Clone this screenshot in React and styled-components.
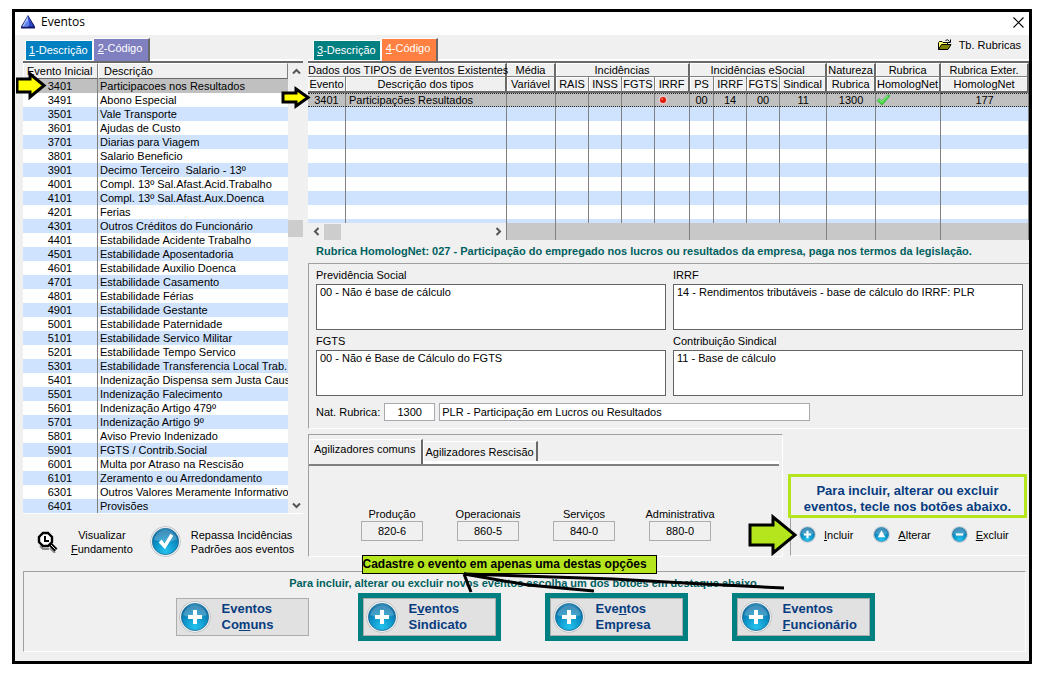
import React, { useState } from "react";
import styled, { createGlobalStyle } from "styled-components";

const EVENTS = [
  ["3401", "Participacoes nos Resultados"],
  ["3491", "Abono Especial"],
  ["3501", "Vale Transporte"],
  ["3601", "Ajudas de Custo"],
  ["3701", "Diarias para Viagem"],
  ["3801", "Salario Beneficio"],
  ["3901", "Decimo Terceiro  Salario - 13º"],
  ["4001", "Compl. 13º Sal.Afast.Acid.Trabalho"],
  ["4101", "Compl. 13º Sal.Afast.Aux.Doenca"],
  ["4201", "Ferias"],
  ["4301", "Outros Créditos do Funcionário"],
  ["4401", "Estabilidade Acidente Trabalho"],
  ["4501", "Estabilidade Aposentadoria"],
  ["4601", "Estabilidade Auxilio Doenca"],
  ["4701", "Estabilidade Casamento"],
  ["4801", "Estabilidade Férias"],
  ["4901", "Estabilidade Gestante"],
  ["5001", "Estabilidade Paternidade"],
  ["5101", "Estabilidade Servico Militar"],
  ["5201", "Estabilidade Tempo Servico"],
  ["5301", "Estabilidade Transferencia Local Trab."],
  ["5401", "Indenização Dispensa sem Justa Causa"],
  ["5501", "Indenização Falecimento"],
  ["5601", "Indenização Artigo 479º"],
  ["5701", "Indenização Artigo 9º"],
  ["5801", "Aviso Previo Indenizado"],
  ["5901", "FGTS / Contrib.Social"],
  ["6001", "Multa por Atraso na Rescisão"],
  ["6101", "Zeramento e ou Arredondamento"],
  ["6301", "Outros Valores Meramente Informativos"],
  ["6401", "Provisões"],
];

// the last column takes what is left
const TYPE_COLUMNS = [38, 161, 49, 33, 33, 33, 35, 24, 33, 33, 47, 49, 65, null];
const EMPTY_ROWS = [0, 1, 2, 3, 4, 5, 6, 7];

const SHORTCUTS = [
  ["Produção", "820-6"],
  ["Operacionais", "860-5"],
  ["Serviços", "840-0"],
  ["Administrativa", "880-0"],
];

const Orb = ({ size, kind }) => (
  <svg width={size} height={size} viewBox="0 0 32 32" aria-hidden="true">
    <defs>
      <radialGradient id={`orb-${kind}-${size}`} cx="0.5" cy="0.85" r="0.85">
        <stop offset="0" stopColor="#25c3ee" />
        <stop offset="0.5" stopColor="#0c93c8" />
        <stop offset="0.85" stopColor="#0d70a6" />
        <stop offset="1" stopColor="#3d9cc6" />
      </radialGradient>
    </defs>
    <circle cx="16" cy="16" r="15.700" fill="#b9bec2" />
    <circle cx="16" cy="16" r="14.900" fill="#f4f6f7" />
    <circle cx="16" cy="16" r="13.600" fill={`url(#orb-${kind}-${size})`} stroke="#17608a" strokeWidth="0.7" />
    <path d="M4 14 A12.3 12.3 0 0 1 28 14 Q16 19 4 14Z" fill="#fff" opacity="0.22" />
    {kind === "plus" && <path d="M14 9h4v5h5v4h-5v5h-4v-5h-5v-4h5z" fill="#fff" />}
    {kind === "minus" && <path d="M9 14h14v4h-14z" fill="#fff" />}
    {kind === "up" && <path d="M16 8l7 13h-14z" fill="#fff" />}
    {kind === "check" && <path d="M9 17l3-3 3 4 6-10 3 2-8.5 14z" fill="#fff" />}
  </svg>
);

const Logo = () => (
  <svg width="14" height="14" viewBox="0 0 14 14" aria-hidden="true">
    <path d="M7 0L14 11.5V13.5H0V11.5Z" fill="#10186c" />
    <path d="M7 1L1 11.5H7Z" fill="#a9c4ff" />
    <path d="M7 1V11.5H12.5Z" fill="#2f49c8" />
    <path d="M5 7L3 11H8L8 5Z" fill="#5d82f0" />
  </svg>
);

const Folder = () => (
  <svg width="14" height="12" viewBox="0 0 14 12" aria-hidden="true">
    <path d="M0.5 10.5V3.5L1.5 2.5H4L5 3.5H9.5V5.5" fill="#ffff66" stroke="#000" />
    <path d="M0.5 10.5L3.5 5.5H13L10 10.5Z" fill="#808000" stroke="#000" />
    <path d="M7.5 1.5Q9.5 -0.5 11.5 2.5M12.5 0.5V3.5H9.5" fill="none" stroke="#000" />
  </svg>
);

const Magnifier = () => (
  <svg width="22" height="22" viewBox="0 0 22 22" aria-hidden="true">
    <path d="M3 15L6 18H12M13 17L18 22" fill="none" stroke="#8a8a8a" strokeWidth="2" />
    <path d="M13 13L19 19" stroke="#000" strokeWidth="4" />
    <path d="M14 14L18.500 18.500" stroke="#ddd" strokeWidth="1" />
    <path d="M6 2H11L15 6V11L11 15H6L2 11V6Z" fill="#fff" stroke="#000" strokeWidth="2.400" />
    <path d="M8 5V10H12" fill="none" stroke="#000" strokeWidth="2" />
  </svg>
);

const Tick = () => (
  <svg width="15" height="12" viewBox="0 0 15 13" aria-hidden="true">
    <path d="M0.500 7L3 5L5.500 7.500L12 1L14.500 2L6 12Z" fill="#43d843" stroke="#2aa12a" strokeWidth="0.700" />
    <path d="M2 7L3 6L5.500 8.500L12 2" fill="none" stroke="#a2f5a2" />
  </svg>
);

const RedDot = () => (
  <svg width="10" height="10" viewBox="0 0 10 10" aria-hidden="true">
    <circle cx="5" cy="5" r="4.500" fill="#e3c6c6" />
    <circle cx="5" cy="5" r="3" fill="#e01808" />
    <circle cx="4.200" cy="4" r="1" fill="#ff7a5c" />
  </svg>
);

const Chevron = ({ d }) => (
  <svg width="9" height="9" viewBox="0 0 9 9" aria-hidden="true">
    <path d={d} fill="none" stroke="#555" strokeWidth="2" />
  </svg>
);

const Arrow = ({ width, height, fill, viewBox, d }) => (
  <svg width={width} height={height} viewBox={viewBox} aria-hidden="true">
    <path d={d} fill={fill} stroke="#000" strokeWidth="3" />
  </svg>
);

const App = () => {
  const [selected, setSelected] = useState("3401");

  return (
    <Page>
      <GlobalStyle />
      <Window>
        <TitleBar>
          <Logo />
          <Title>Eventos</Title>
          <CloseButton aria-label="Fechar">
            <svg width="11" height="11" viewBox="0 0 11 11">
              <path d="M0.500 0.500L10.500 10.500M10.500 0.500L0.500 10.500" stroke="#000" strokeWidth="1.100" />
            </svg>
          </CloseButton>
        </TitleBar>

        <Columns>
          <LeftColumn>
            <TabBar>
              <Tab color="#0080c0"><u>1</u>-Descrição</Tab>
              <Tab color="#8080c0" $active><u>2</u>-Código</Tab>
            </TabBar>
            <ListArea>
              <EventTable>
                <colgroup>
                  <col width="75" />
                  <col />
                </colgroup>
                <thead>
                  <tr>
                    <th>Evento Inicial</th>
                    <th>Descrição</th>
                  </tr>
                </thead>
                <tbody>
                  {EVENTS.map(([code, name]) => (
                    <EventRow key={code} $selected={code === selected} onClick={() => setSelected(code)}>
                      <td>{code}</td>
                      <td>{name}</td>
                    </EventRow>
                  ))}
                </tbody>
              </EventTable>
              <ScrollBar>
                <ScrollButton aria-label="Subir"><Chevron d="M1 6.500L4.500 3L8 6.500" /></ScrollButton>
                <ScrollThumb />
                <ScrollButton aria-label="Descer"><Chevron d="M1 2.500L4.500 6L8 2.500" /></ScrollButton>
              </ScrollBar>
            </ListArea>
            <ListActions>
              <PlainButton $gap={12}>
                <Magnifier />
                <Centered>Visualizar<br /><u>F</u>undamento</Centered>
              </PlainButton>
              <PlainButton $gap={10}>
                <Orb size={31} kind="check" />
                <span>Repassa Incidências<br />Padrões aos eventos</span>
              </PlainButton>
            </ListActions>
            <ListArrow>
              <Arrow width={31} height={32} viewBox="0 0 31 32" fill="#ffff00" d="M1 9H14V4L28 15.500L14 27V22H1Z" />
            </ListArrow>
          </LeftColumn>

          <RightColumn>
            <TabBar $indent>
              <Tab color="#008080"><u>3</u>-Descrição</Tab>
              <Tab color="#ff8040" $active><u>4</u>-Código</Tab>
              <RubricasButton>
                <Folder />
                Tb. Rubricas
              </RubricasButton>
            </TabBar>

            <TypeTable>
              <colgroup>
                {TYPE_COLUMNS.map((width, i) => <col key={i} width={width || undefined} />)}
              </colgroup>
              <thead>
                <tr>
                  <GroupHead colSpan={2}>Dados dos TIPOS de Eventos Existentes</GroupHead>
                  <GroupHead>Média</GroupHead>
                  <GroupHead colSpan={4}>Incidências</GroupHead>
                  <GroupHead colSpan={4}>Incidências eSocial</GroupHead>
                  <GroupHead>Natureza</GroupHead>
                  <GroupHead>Rubrica</GroupHead>
                  <GroupHead>Rubrica Exter.</GroupHead>
                </tr>
                <tr>
                  <SubHead>Evento</SubHead>
                  <SubHead $last>Descrição dos tipos</SubHead>
                  <SubHead $last>Variável</SubHead>
                  <SubHead>RAIS</SubHead>
                  <SubHead>INSS</SubHead>
                  <SubHead>FGTS</SubHead>
                  <SubHead $last>IRRF</SubHead>
                  <SubHead>PS</SubHead>
                  <SubHead>IRRF</SubHead>
                  <SubHead>FGTS</SubHead>
                  <SubHead $last>Sindical</SubHead>
                  <SubHead $last>Rubrica</SubHead>
                  <SubHead $last>HomologNet</SubHead>
                  <SubHead $last>HomologNet</SubHead>
                </tr>
              </thead>
              <tbody>
                <SelectedType>
                  <TypeCell>3401</TypeCell>
                  <TypeCell $left>Participações Resultados</TypeCell>
                  <TypeCell />
                  <TypeCell />
                  <TypeCell />
                  <TypeCell />
                  <TypeCell $left><RedDot /></TypeCell>
                  <TypeCell>00</TypeCell>
                  <TypeCell>14</TypeCell>
                  <TypeCell>00</TypeCell>
                  <TypeCell>11</TypeCell>
                  <TypeCell>1300</TypeCell>
                  <TypeCell $flush><Tick /></TypeCell>
                  <TypeCell>177</TypeCell>
                </SelectedType>
                {EMPTY_ROWS.map((row) => (
                  <EmptyType key={row}>
                    {TYPE_COLUMNS.map((_, i) => <TypeCell key={i} />)}
                  </EmptyType>
                ))}
                <EmptyType $cut>
                  {TYPE_COLUMNS.map((_, i) => <TypeCell key={i} />)}
                </EmptyType>
              </tbody>
              <tfoot>
                <tr>
                  <ScrollCell colSpan={2}>
                    <HorizontalScroll>
                      <ScrollButton aria-label="Esquerda"><Chevron d="M6.500 1L3 4.500L6.500 8" /></ScrollButton>
                      <HorizontalThumb />
                      <ScrollButton aria-label="Direita"><Chevron d="M2.500 1L6 4.500L2.500 8" /></ScrollButton>
                    </HorizontalScroll>
                  </ScrollCell>
                  <FootCell />
                  <FootCell colSpan={4} />
                  <FootCell colSpan={4} />
                  <FootCell />
                  <FootCell />
                  <FootCell />
                </tr>
              </tfoot>
            </TypeTable>

            <HomologNote>
              Rubrica HomologNet: 027 - Participação do empregado nos lucros ou resultados da empresa, paga nos termos da legislação.
            </HomologNote>

            <Details>
              <Fields>
                <Field>
                  <label htmlFor="previdencia">Previdência Social</label>
                  <Memo id="previdencia" defaultValue="00 - Não é base de cálculo" />
                </Field>
                <Field>
                  <label htmlFor="irrf">IRRF</label>
                  <Memo id="irrf" defaultValue="14 - Rendimentos tributáveis - base de cálculo do IRRF: PLR" />
                </Field>
                <Field>
                  <label htmlFor="fgts">FGTS</label>
                  <Memo id="fgts" defaultValue="00 - Não é Base de Cálculo do FGTS" />
                </Field>
                <Field>
                  <label htmlFor="sindical">Contribuição Sindical</label>
                  <Memo id="sindical" defaultValue="11 - Base de cálculo" />
                </Field>
              </Fields>
              <NatureRow>
                <label htmlFor="natureza">Nat. Rubrica:</label>
                <CodeInput id="natureza" defaultValue="1300" />
                <NameInput aria-label="Descrição da rubrica" defaultValue="PLR - Participação em Lucros ou Resultados" />
              </NatureRow>
            </Details>

            <LowerRow>
              <ShortcutPanel>
                <PanelTabs>
                  <PanelTab $active>Agilizadores comuns</PanelTab>
                  <PanelTab>Agilizadores Rescisão</PanelTab>
                </PanelTabs>
                <Shortcuts>
                  {SHORTCUTS.map(([name, code]) => (
                    <Shortcut key={code}>
                      <label htmlFor={`agil-${code}`}>{name}</label>
                      <ShortcutButton id={`agil-${code}`}>{code}</ShortcutButton>
                    </Shortcut>
                  ))}
                </Shortcuts>
              </ShortcutPanel>

              <EditPanel>
                <EditHint>Para incluir, alterar ou excluir eventos, tecle nos botões abaixo.</EditHint>
                <EditButtons>
                  <PlainButton $gap={8}><Orb size={17} kind="plus" /><span><u>I</u>ncluir</span></PlainButton>
                  <PlainButton $gap={8}><Orb size={17} kind="up" /><span><u>A</u>lterar</span></PlainButton>
                  <PlainButton $gap={8}><Orb size={17} kind="minus" /><span><u>E</u>xcluir</span></PlainButton>
                </EditButtons>
                <EditArrow>
                  <Arrow width={50} height={44} viewBox="0 0 50 44" fill="#b5e61d" d="M2 12H25V4L47 22L25 40V32H2Z" />
                </EditArrow>
              </EditPanel>
            </LowerRow>

            <TypeArrow>
              <Arrow width={31} height={26} viewBox="0 0 31 26" fill="#ffff00" d="M2 8H15V4L27 12.500L15 21V17H2Z" />
            </TypeArrow>
          </RightColumn>
        </Columns>

        <NewEventPanel>
          <NewEventHint>Para incluir, alterar ou excluir novos eventos escolha um dos botões em destaque abaixo.</NewEventHint>
          <NewEventButtons>
            <Frame>
              <BigButton><Orb size={32} kind="plus" /><span>Eventos<br />Co<u>m</u>uns</span></BigButton>
            </Frame>
            <Frame $marked>
              <BigButton><Orb size={32} kind="plus" /><span>E<u>v</u>entos<br />Sindicato</span></BigButton>
            </Frame>
            <Frame $marked>
              <BigButton><Orb size={32} kind="plus" /><span>Eve<u>n</u>tos<br />Empresa</span></BigButton>
            </Frame>
            <Frame $marked>
              <BigButton><Orb size={32} kind="plus" /><span>Eventos<br /><u>F</u>uncionário</span></BigButton>
            </Frame>
          </NewEventButtons>
          <Callout>
            Cadastre o evento em apenas uma destas opções
            <PenStrokes width="424" height="40" viewBox="0 0 424 40" aria-hidden="true">
              <path d="M101 18L108 36M101 18L165 29L231 35M101 18L250 23L340 28L421 32" fill="none" stroke="#000" strokeWidth="3" />
            </PenStrokes>
          </Callout>
        </NewEventPanel>
      </Window>
    </Page>
  );
};

const GlobalStyle = createGlobalStyle`
  * {
    box-sizing: border-box;
  }
  body {
    margin: 0;
    background: white;
    color: black;
    font-family: "Liberation Sans", Arial, sans-serif;
    font-size: 11px;
    line-height: 14px;
  }
  button, input, textarea {
    font: inherit;
    color: inherit;
    border-radius: 0;
  }
  svg {
    display: block;
    flex-shrink: 0;
  }
`;

const Page = styled.main`
  padding: 9px 15px 11px 12px;
`;

const Window = styled.section`
  border: 3px solid black;
  background: #f0f0f0;
`;

const TitleBar = styled.header`
  display: flex;
  align-items: center;
  height: 23px;
  padding: 0 5px 3px 6px;
  background: white;
`;

const Title = styled.h1`
  flex: 1;
  margin: 0 0 0 6px;
  font-family: "Open Sans", "Noto Sans", sans-serif;
  font-size: 12px;
  font-weight: normal;
`;

const CloseButton = styled.button`
  padding: 0;
  border: none;
  background: none;
`;

const Columns = styled.div`
  display: grid;
  grid-template-columns: 280px minmax(0, 1fr);
  column-gap: 5px;
  padding-left: 8px;
`;

const LeftColumn = styled.div`
  position: relative;
`;

const RightColumn = styled.div`
  position: relative;
  min-width: 0;
`;

const TabBar = styled.div`
  display: flex;
  align-items: flex-start;
  height: 28px;
  padding: 3px 0 0 ${(props) => (props.$indent ? "5px" : "2px")};
  border-bottom: 2px solid #696969;
  box-shadow: inset 0 -2px white;
`;

const Tab = styled.button`
  height: ${(props) => (props.$active ? "23px" : "20px")};
  margin-top: ${(props) => (props.$active ? "0" : "2px")};
  padding: 0 ${(props) => (props.$active ? "6px 4px 4px" : "4px 1px 3px")};
  border: 1px solid white;
  border-right: ${(props) => (props.$active ? "2px solid #696969" : "1px solid white")};
  border-bottom: none;
  background: ${(props) => props.color};
  color: white;
`;

const RubricasButton = styled.button`
  display: flex;
  align-items: center;
  gap: 7px;
  margin-left: auto;
  padding: 0 8px 0 0;
  border: none;
  background: none;
`;

const ListArea = styled.div`
  display: flex;
  border-bottom: 1px solid white;
`;

const EventTable = styled.table`
  flex: 1;
  min-width: 0;
  width: 0;
  table-layout: fixed;
  border-collapse: separate;
  border-spacing: 0;

  th {
    height: 16px;
    padding: 0 5px;
    border: 1px solid;
    border-color: white #808080 #696969 white;
    font-weight: normal;
    text-align: left;
    white-space: nowrap;
  }
  th:first-child {
    padding: 0 3px;
  }
  td {
    height: 14px;
    padding: 0 0 0 2px;
    white-space: pre;
    overflow: hidden;
  }
  td:first-child {
    border-right: 1px solid #808080;
    padding: 0;
    text-align: center;
  }
`;

const EventRow = styled.tr`
  background: ${(props) => (props.$selected ? "#c0c0c0" : "white")};
  &:nth-child(odd) {
    background: ${(props) => (props.$selected ? "#c0c0c0" : "#cfe3ff")};
  }
`;

const ScrollBar = styled.div`
  display: flex;
  flex-direction: column;
  justify-content: space-between;
  width: 15px;
`;

const ScrollButton = styled.button`
  display: flex;
  align-items: center;
  justify-content: center;
  width: 16px;
  height: 16px;
  padding: 0;
  border: none;
  background: none;
`;

const ScrollThumb = styled.div`
  height: 17px;
  margin-bottom: 120px;
  background: #cdcdcd;
`;

const ListActions = styled.div`
  display: flex;
  align-items: center;
  gap: 17px;
  height: 57px;
  padding: 0 0 2px 14px;
`;

const PlainButton = styled.button`
  display: flex;
  align-items: center;
  gap: ${(props) => props.$gap}px;
  padding: 0;
  border: none;
  background: none;
  text-align: left;
  white-space: nowrap;
`;

const Centered = styled.span`
  text-align: center;
`;

const ListArrow = styled.div`
  position: absolute;
  top: 35px;
  left: -7px;
`;

const TypeArrow = styled.div`
  position: absolute;
  top: 50px;
  left: -27px;
`;

const TypeTable = styled.table`
  width: 100%;
  table-layout: fixed;
  border-collapse: separate;
  border-spacing: 0;
`;

const HeadCell = styled.th`
  padding: 0;
  font-weight: normal;
  text-align: center;
  white-space: nowrap;
  line-height: 12px;
`;

const GroupHead = styled(HeadCell)`
  height: 14px;
  border-top: 1px solid white;
  border-right: 2px solid #696969;
  border-bottom: 1px solid #808080;
  box-shadow: inset 1px 0 white;
`;

const SubHead = styled(HeadCell)`
  height: 16px;
  border-right: ${(props) => (props.$last ? "2px solid #696969" : "1px solid #808080")};
  border-bottom: 2px solid #696969;
  box-shadow: inset 1px 1px white;
`;

const TypeCell = styled.td`
  height: 14px;
  padding: 0 ${(props) => (props.$flush ? "0" : "3px")};
  border-right: 1px solid #808080;
  line-height: 12px;
  text-align: ${(props) => (props.$left ? "left" : "center")};
  white-space: nowrap;
`;

const SelectedType = styled.tr`
  background: #c0c0c0;
  td {
    border-top: 1px dotted #222;
    border-bottom: 1px dotted #222;
  }
`;

const EmptyType = styled.tr`
  &:nth-child(odd) {
    background: white;
  }
  &:nth-child(even) {
    background: #cfe3ff;
  }
  td {
    height: ${(props) => (props.$cut ? "4px" : "14px")};
    line-height: 4px;
  }
`;

const FootCell = styled.td`
  height: 17px;
  padding: 0;
  border-right: 1px solid #808080;
  background: #c8c8c8;
`;

const ScrollCell = styled(FootCell)`
  background: #f0f0f0;
`;

const HorizontalScroll = styled.div`
  display: flex;
  align-items: center;
`;

const HorizontalThumb = styled.div`
  width: 17px;
  height: 16px;
  margin-right: auto;
  background: #cdcdcd;
`;

const HomologNote = styled.p`
  margin: 0;
  padding-left: 8px;
  color: #006060;
  font-weight: bold;
  line-height: 23px;
  white-space: nowrap;
`;

const Details = styled.div`
  padding: 4px 6px 7px 7px;
  border-top: 1px solid #a0a0a0;
  border-left: 1px solid #a0a0a0;
  border-bottom: 1px solid white;
`;

const Fields = styled.div`
  display: grid;
  grid-template-columns: 1fr 1fr;
  gap: 4px 7px;
`;

const Field = styled.div`
  display: flex;
  flex-direction: column;
  gap: 2px;
`;

const Memo = styled.textarea`
  height: 46px;
  padding: 0 3px;
  border: 1px solid #646464;
  background: white;
  outline: none;
  resize: none;
`;

const NatureRow = styled.div`
  display: flex;
  align-items: center;
  gap: 4px;
  margin-top: 7px;
`;

const CodeInput = styled.input`
  width: 51px;
  height: 18px;
  padding: 0;
  border: 1px solid #a9a9b0;
  text-align: center;
`;

const NameInput = styled.input`
  width: 371px;
  height: 18px;
  padding: 0 2px;
  border: 1px solid #a9a9b0;
`;

const LowerRow = styled.div`
  display: grid;
  grid-template-columns: minmax(0, 1fr) 239px;
  gap: 5px;
  margin-top: 5px;
  padding-right: 2px;
`;

const ShortcutPanel = styled.div`
  height: 123px;
  border: 1px solid;
  border-color: #a0a0a0 white white #a0a0a0;
`;

const PanelTabs = styled.div`
  display: flex;
  align-items: flex-start;
  height: 31px;
  margin-right: 3px;
  padding-top: 4px;
  border-bottom: 2px solid #808080;
  box-shadow: inset 0 -3px white;
`;

const PanelTab = styled.button`
  height: ${(props) => (props.$active ? "25px" : "20px")};
  margin-top: ${(props) => (props.$active ? "0" : "2px")};
  padding: 0 ${(props) => (props.$active ? "5px 6px 4px" : "2px 0 2px")};
  border: 1px solid white;
  border-right: 2px solid #696969;
  border-bottom: none;
  background: #f0f0f0;
`;

const Shortcuts = styled.div`
  display: flex;
  gap: 34px;
  padding: 41px 0 0 52px;
`;

const Shortcut = styled.div`
  display: flex;
  flex-direction: column;
  align-items: center;
  width: 62px;
`;

const ShortcutButton = styled.button`
  width: 100%;
  height: 20px;
  padding: 0;
  border: 1px solid #adadad;
  background: #f0f0f0;
`;

const EditPanel = styled.div`
  position: relative;
  margin-top: 40px;
`;

const EditHint = styled.p`
  margin: 0;
  padding: 6px 6px 0;
  border: 3px solid #b5e61d;
  color: #083c80;
  font-size: 13px;
  font-weight: bold;
  line-height: 16px;
  text-align: center;
`;

const EditButtons = styled.div`
  display: flex;
  align-items: center;
  gap: 20px;
  height: 38px;
  margin-left: 2px;
  padding: 0 0 4px 8px;
  border-left: 1px solid #a0a0a0;
  border-bottom: 1px solid white;
`;

const EditArrow = styled.div`
  position: absolute;
  top: 39px;
  left: -40px;
`;

const NewEventPanel = styled.div`
  position: relative;
  height: 81px;
  margin: 0 3px 9px 8px;
  padding-top: 4px;
  border: 1px solid;
  border-color: #a0a0a0 white white #a0a0a0;
`;

const NewEventHint = styled.p`
  margin: 0;
  color: #006060;
  font-weight: bold;
  text-align: center;
`;

const NewEventButtons = styled.div`
  display: flex;
  justify-content: center;
  gap: 44px;
  margin-top: 3px;
  padding-right: 4px;
`;

const Frame = styled.div`
  width: 143px;
  height: 48px;
  border: 5px solid ${(props) => (props.$marked ? "#008080" : "transparent")};
`;

const BigButton = styled.button`
  display: flex;
  align-items: center;
  gap: 11px;
  width: 100%;
  height: 100%;
  padding: 0 2px;
  border: 1px solid #adadad;
  background: #e1e1e1;
  color: #083c80;
  font-size: 13px;
  font-weight: bold;
  line-height: 16px;
  text-align: left;
`;

const Callout = styled.div`
  position: absolute;
  top: -17px;
  left: calc(50% - 163px);
  width: 295px;
  height: 19px;
  border: 1px solid black;
  background: #b5e61d;
  font-size: 12px;
  font-weight: bold;
  line-height: 17px;
  white-space: nowrap;
`;

const PenStrokes = styled.svg`
  position: absolute;
  top: 0;
  left: 0;
  pointer-events: none;
`;

export default App;
